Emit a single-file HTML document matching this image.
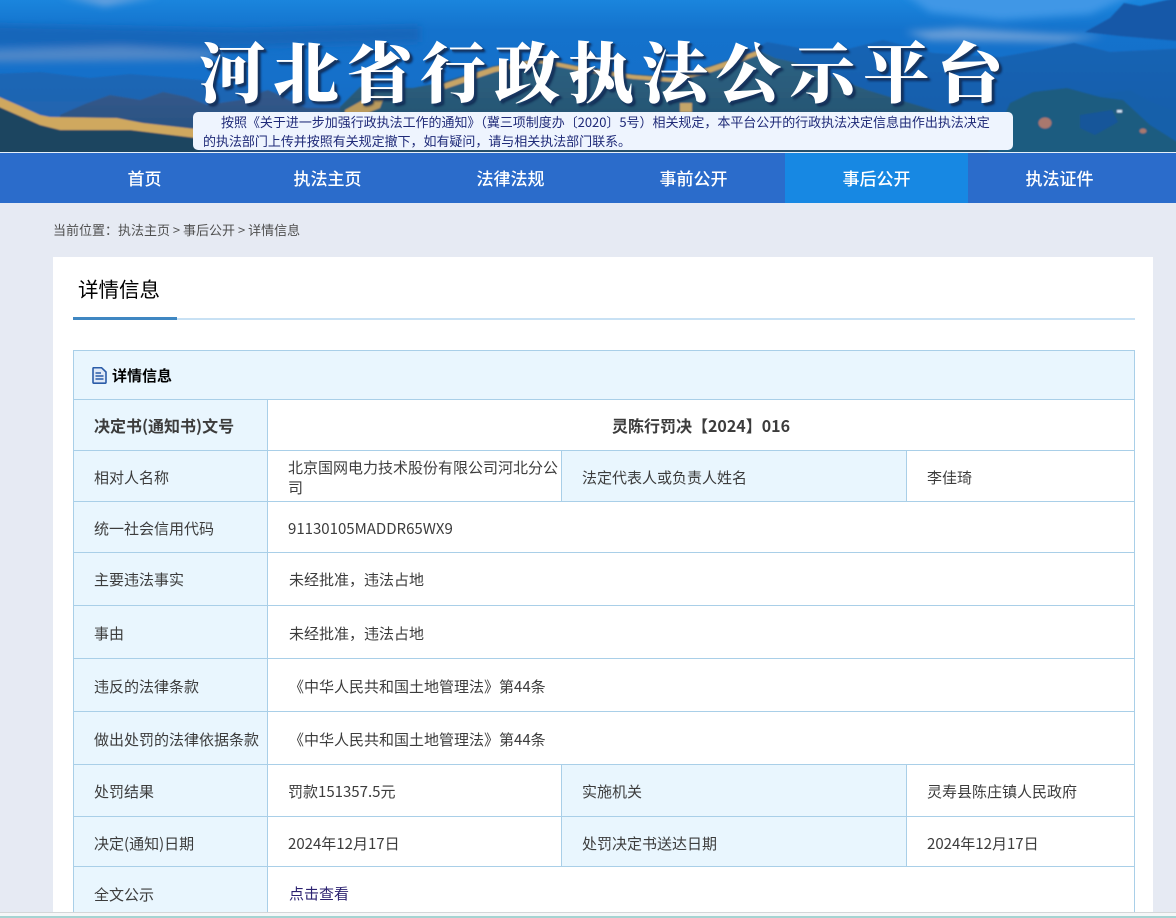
<!DOCTYPE html>
<html lang="zh-CN"><head><meta charset="utf-8"><title>河北省行政执法公示平台</title>
<style>
*{box-sizing:border-box}
html,body{margin:0;padding:0;width:1176px;height:918px;overflow:hidden;background:#e6eaf3;font-family:"Noto Sans CJK SC","Liberation Sans",sans-serif}
#banner{position:absolute;left:0;top:0;width:1176px;height:152px}
#title{position:absolute;left:199px;top:24px;width:830px;height:90px;font:900 66px/90px "Noto Serif CJK SC","Liberation Serif",serif;letter-spacing:7.8px;color:#fff;white-space:nowrap;text-shadow:2px 2px 1px #17355f,3px 3px 2px rgba(10,30,70,.75)}
#notice{position:absolute;left:193px;top:112px;width:820px;height:38px;background:#eef4fe;border-radius:5px;color:#1f2a78;font-size:13px;line-height:19px;padding:0 10px;letter-spacing:-.03px}
#notice div{white-space:nowrap}
#line{position:absolute;left:0;top:152px;width:1176px;height:1px;background:#e6f0fa}
#nav{position:absolute;left:0;top:153px;width:1176px;height:50px;background:#2b6ccb}
#nav a{position:absolute;top:0;width:183px;height:50px;line-height:49px;text-align:center;color:#fff;font-size:17px;font-weight:500;text-decoration:none}
#nav a.on{background:#1788e3}
#crumb{position:absolute;left:53px;top:220px;font-size:13px;line-height:20px;color:#4f4f4f;white-space:nowrap}
#card{position:absolute;left:53px;top:257px;width:1100px;height:655px;background:#fff}
#h{position:absolute;left:78px;top:273px;font-size:20.5px;line-height:30px;color:#000}
#u1{position:absolute;left:73px;top:318px;width:1062px;height:2px;background:#c8e1f4}
#u1b{position:absolute;left:73px;top:317px;width:104px;height:3px;background:#3f87c2}
#t{position:absolute;left:73px;top:350px;width:1062px;height:562px;overflow:hidden;border:1px solid #a9cfe8;border-bottom:0}
.c{position:absolute;color:#3c3c3c;font-size:15px;line-height:20px;display:flex;align-items:center;border-bottom:1px solid #a9cfe8;border-right:1px solid #a9cfe8;padding:4px 0 0 20px}
.l{background:#e9f6fe}
.p2{padding-top:2px}
.hd{position:absolute;left:0;top:0;width:1060px;height:49px;background:#e9f6fe;border-bottom:1px solid #a9cfe8}
.hd b{position:absolute;left:38px;top:15px;font-size:15px;line-height:20px;color:#000;font-weight:700}
.hd svg{position:absolute;left:18px;top:16px}
#b1{position:absolute;left:0;top:912px;width:1176px;height:1px;background:#d4d6d8}
#b2{position:absolute;left:0;top:913px;width:1176px;height:3px;background:#f6f7f8}
#b3{position:absolute;left:0;top:916px;width:1176px;height:2px;background:#a5d4d2}
</style></head><body>
<svg id="banner" viewBox="0 0 1176 152">
<defs>
<linearGradient id="sky" x1="0" y1="0" x2="0" y2="1"><stop offset="0" stop-color="#1a85dd"/><stop offset=".2" stop-color="#1472cc"/><stop offset=".5" stop-color="#1570ca"/><stop offset="1" stop-color="#1467bd"/></linearGradient>
<linearGradient id="far" x1="0" y1="0" x2="0" y2="1"><stop offset="0" stop-color="#1a66b6"/><stop offset="1" stop-color="#2a62a8"/></linearGradient>
<linearGradient id="mid" x1="0" y1="0" x2="0" y2="1"><stop offset="0" stop-color="#33598a"/><stop offset="1" stop-color="#224b7c"/></linearGradient>
<linearGradient id="cen" x1="0" y1="0" x2="0" y2="1"><stop offset="0" stop-color="#2a6284"/><stop offset="1" stop-color="#264e68"/></linearGradient>
<linearGradient id="rb" x1="0" y1="0" x2="0" y2="1"><stop offset="0" stop-color="#1564b4"/><stop offset="1" stop-color="#0f5aa6"/></linearGradient>
<filter id="b1f" x="-5%" y="-5%" width="110%" height="120%"><feGaussianBlur stdDeviation=".7"/></filter>
<filter id="b4f" x="-10%" y="-50%" width="120%" height="200%"><feGaussianBlur stdDeviation="4"/></filter>
</defs>
<rect width="1176" height="152" fill="url(#sky)"/>
<g filter="url(#b4f)">
<path d="M-10 25 L240 30 L420 26 L420 42 L200 48 L-10 46Z" fill="#1366ba"/>
<path d="M-10 50 L120 46 L230 52 L200 60 L-10 62Z" fill="#4f87c8"/>
<path d="M60 -5 L105 6 L160 -5Z" fill="#6aa3de"/>
<path d="M900 -10 L1143 -10 L1090 14 L1000 20 L930 12Z" fill="#4097e6"/>
<path d="M905 32 L960 28 L1050 34 L1105 36 L1060 42 L930 40Z" fill="#6a9fd8"/>
</g>
<g filter="url(#b1f)">
<path d="M1085 32 L1110 18 L1124 3 L1140 6 L1190 -5 L1190 42 L1120 36Z" fill="#1259a8"/>
<path d="M730 62 L767 42 L800 48 L844 50 L883 40 L933 53 L1000 57 L1040 50 L1074 43 L1110 52 L1190 48 L1190 160 L730 160Z" fill="url(#rb)"/>
<path d="M-10 74 L40 72 L90 78 L130 74 L200 80 L260 90 L340 100 L340 160 L-10 160Z" fill="url(#far)"/>
<path d="M60 115 L85 104 L110 95 L140 100 L163 92 L187 97 L207 105 L240 100 L268 90 L306 108 L345 108 L345 160 L60 160Z" fill="url(#mid)"/>
<path d="M340 107 L360 87 L413 88 L443 82 L493 66 L540 58 L580 66 L633 74 L673 77 L710 66 L757 50 L775 58 L793 62 L833 77 L867 90 L900 100 L933 110 L1010 135 L1030 160 L340 160Z" fill="url(#cen)"/>
<path d="M1060 100 L1110 93 L1130 90 L1147 100 L1190 118 L1190 160 L1060 160Z" fill="#1560aa"/>
<path d="M1010 103 L1033 92 L1067 88 L1100 97 L1123 100 L1150 125 L1190 150 L1190 160 L985 160Z" fill="#1c5b80"/>
<path d="M1080 115 L1112 110 L1118 122 L1095 135 L1080 128Z" fill="#17569a"/>
<ellipse cx="1045" cy="123" rx="6.5" ry="5.5" fill="#a9786e"/>
<ellipse cx="1143" cy="131" rx="3.5" ry="2.5" fill="#a9786e"/>
<rect x="1117" y="110" width="5" height="2.5" fill="#cfe3f5"/>
<path d="M-10 100 L40 122 L60 128 L130 128 L200 136 L200 160 L-10 160Z" fill="#1e4560"/>
<path d="M-10 93 L20 106 L40 115 L50 117 L117 118 L143 123 L196 129 L196 138 L130 130 L60 130 L40 125 L-10 103Z" fill="#cfa85f"/>
<path d="M345 110 L370 96 L384 97 L380 108 L345 122Z" fill="#b99a5c"/>
<path d="M443 84 L493 67 L540 59 L580 67 L633 75 L673 78 L710 67 L757 51 L759 55 L712 72 L673 82 L633 79 L580 71 L540 63 L495 72 L445 89Z" fill="#c7a566"/>
<rect x="680" y="103" width="12" height="9" fill="#c3a669"/>
</g>
</svg>
<div id="title">河北省行政执法公示平台</div>
<div id="notice"><div style="text-indent:18px">按照《关于进一步加强行政执法工作的通知》（冀三项制度办〔2020〕5号）相关规定，本平台公开的行政执法决定信息由作出执法决定</div><div>的执法部门上传并按照有关规定撤下，如有疑问，请与相关执法部门联系。</div></div>
<div id="line"></div>
<div id="nav"><a style="left:53px">首页</a><a style="left:236px">执法主页</a><a style="left:419px">法律法规</a><a style="left:602px">事前公开</a><a class="on" style="left:785px">事后公开</a><a style="left:968px">执法证件</a></div>
<div id="crumb">当前位置：执法主页 &gt; 事后公开 &gt; 详情信息</div>
<div id="card"></div>
<div id="h">详情信息</div>
<div id="u1"></div><div id="u1b"></div>
<div id="t">
<div class="hd"><svg width="15" height="17" viewBox="0 0 15 17"><path d="M1 1.5 Q1 .7 1.8 .7 H9.5 L14 5 V15.3 Q14 16.2 13.2 16.2 H1.8 Q1 16.2 1 15.3Z" fill="#dfe9f7" stroke="#2a5ca8" stroke-width="1.6"/><path d="M3.5 6H9M3.5 9H11.5M3.5 12H11.5" stroke="#2a5ca8" stroke-width="1.5"/></svg><b>详情信息</b></div>
<div class="c l" style="left:0;top:49px;width:194px;height:51px;font-weight:700;font-size:16px;padding-top:0">决定书(通知书)文号</div>
<div class="c" style="left:194px;top:49px;width:867px;height:51px;justify-content:center;font-weight:700;font-size:16px;padding:0">灵陈行罚决【2024】016</div>
<div class="c l" style="left:0;top:100px;width:194px;height:51px">相对人名称</div>
<div class="c" style="left:194px;top:100px;width:294px;height:51px">北京国网电力技术股份有限公司河北分公司</div>
<div class="c l" style="left:488px;top:100px;width:345px;height:51px">法定代表人或负责人姓名</div>
<div class="c" style="left:833px;top:100px;width:228px;height:51px">李佳琦</div>
<div class="c l" style="left:0;top:151px;width:194px;height:51px">统一社会信用代码</div>
<div class="c" style="left:194px;top:151px;width:867px;height:51px">91130105MADDR65WX9</div>
<div class="c l p2" style="left:0;top:202px;width:194px;height:53px">主要违法事实</div>
<div class="c p2" style="left:194px;top:202px;width:867px;height:53px;padding-left:21px">未经批准，违法占地</div>
<div class="c l" style="left:0;top:255px;width:194px;height:53px">事由</div>
<div class="c" style="left:194px;top:255px;width:867px;height:53px;padding-left:21px">未经批准，违法占地</div>
<div class="c l" style="left:0;top:308px;width:194px;height:53px">违反的法律条款</div>
<div class="c" style="left:194px;top:308px;width:867px;height:53px;padding-left:21px">《中华人民共和国土地管理法》第44条</div>
<div class="c l" style="left:0;top:361px;width:194px;height:53px">做出处罚的法律依据条款</div>
<div class="c" style="left:194px;top:361px;width:867px;height:53px;padding-left:21px">《中华人民共和国土地管理法》第44条</div>
<div class="c l p2" style="left:0;top:414px;width:194px;height:52px">处罚结果</div>
<div class="c p2" style="left:194px;top:414px;width:294px;height:52px">罚款151357.5元</div>
<div class="c l p2" style="left:488px;top:414px;width:345px;height:52px">实施机关</div>
<div class="c p2" style="left:833px;top:414px;width:228px;height:52px">灵寿县陈庄镇人民政府</div>
<div class="c l" style="left:0;top:466px;width:194px;height:50px">决定(通知)日期</div>
<div class="c" style="left:194px;top:466px;width:294px;height:50px">2024年12月17日</div>
<div class="c l" style="left:488px;top:466px;width:345px;height:50px">处罚决定书送达日期</div>
<div class="c" style="left:833px;top:466px;width:228px;height:50px">2024年12月17日</div>
<div class="c l" style="left:0;top:516px;width:194px;height:56px;border-bottom:0;padding-top:0">全文公示</div>
<div class="c" style="left:194px;top:516px;width:867px;height:56px;border-bottom:0;color:#2c2270;padding:0 0 2px 21px">点击查看</div>
</div>
<div id="b1"></div><div id="b2"></div><div id="b3"></div>
</body></html>
